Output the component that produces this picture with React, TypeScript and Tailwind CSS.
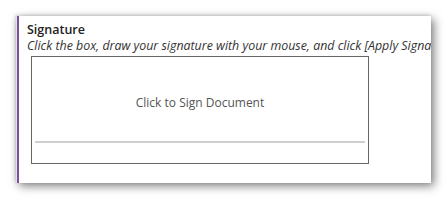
import React from 'react';

const App: React.FC = () => {
    return (
        <div className="w-[448px] h-[201px] bg-white overflow-hidden pt-[16px] pl-[16px]" style={{ fontFamily: '"Open Sans", "DejaVu Sans", sans-serif' }}>
            <div className="w-[415px] h-[167px] bg-white overflow-hidden flex shadow-[3px_3px_9px_rgba(0,0,0,0.5),-1px_-1px_3px_rgba(0,0,0,0.15)]">
                <div className="w-[1px] bg-[#e2e2e2]"></div>
                <div className="w-[2px] bg-[#7d4f9e]"></div>
                <div className="flex-1 pl-[8px] pt-[5px] min-w-0">
                    <h3 className="text-[12.5px] leading-[17px] font-semibold text-[#222]">Signature</h3>
                    <p className="text-[12.4px] leading-[15px] italic text-[#333] whitespace-nowrap">
                        Click the box, draw your signature with your mouse, and click [Apply Signature] to sign the document.
                    </p>
                    <div className="mt-[3px] ml-[4px] w-[338px] h-[108px] border border-[#666] flex flex-col">
                        <div className="flex-1 flex items-center justify-center pt-[12px] text-[12px] text-[#555]">
                            Click to Sign Document
                        </div>
                        <div className="mx-[3px] h-[2px] bg-[#cfcfcf] mb-[20px] mt-[4px]"></div>
                    </div>
                </div>
            </div>
        </div>
    );
};

export default App;
